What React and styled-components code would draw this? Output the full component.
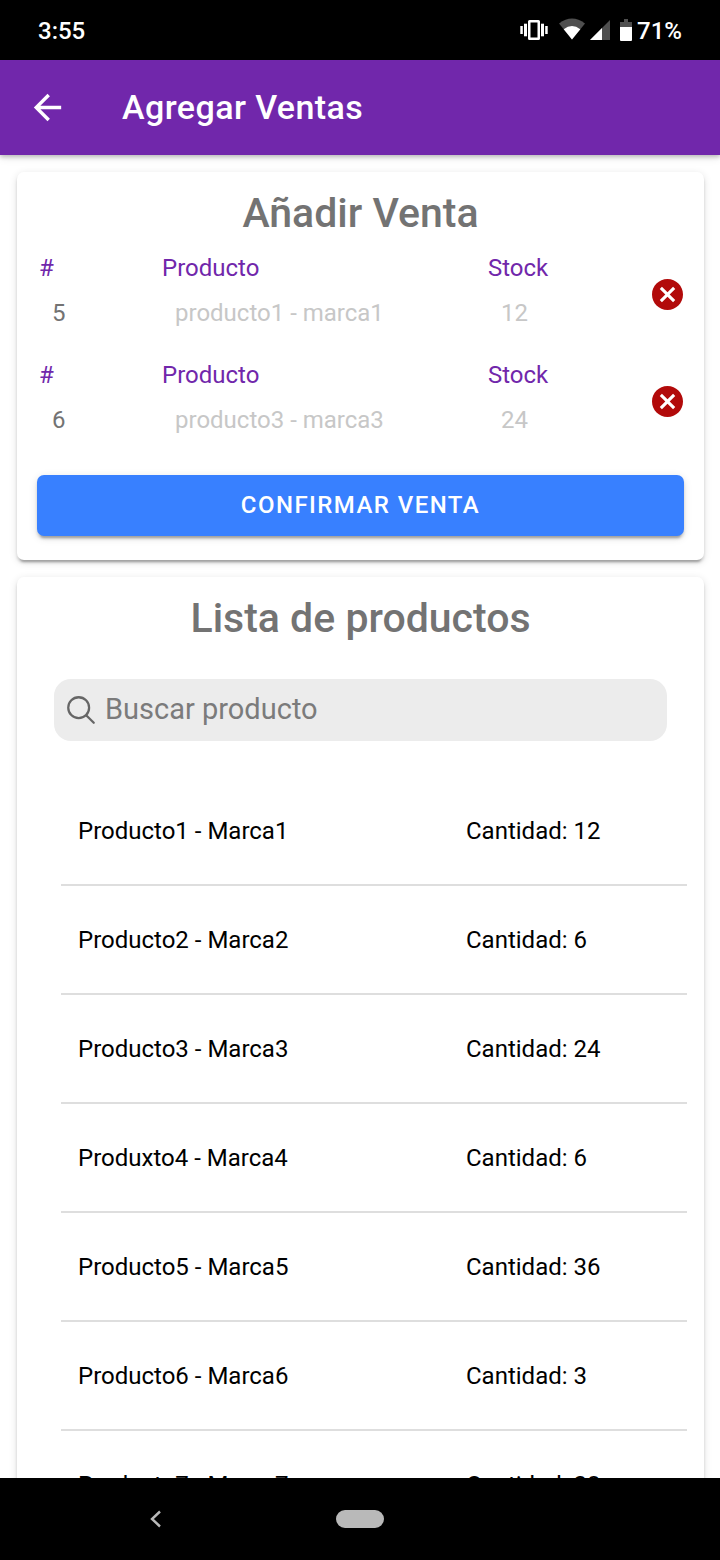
import React, { useState } from "react";
import styled, { createGlobalStyle } from "styled-components";

const GlobalStyle = createGlobalStyle`
  *, *::before, *::after { box-sizing: border-box; }
  body {
    margin: 0;
    background: #fff;
    color: #000;
    font-family: Roboto, "Liberation Sans", sans-serif;
  }
  button, input { font: inherit; color: inherit; }
`;

const Screen = styled.div`
  display: flex;
  flex-direction: column;
  height: 100vh;
`;

const StatusBar = styled.div`
  display: flex;
  align-items: center;
  justify-content: space-between;
  flex: none;
  height: 60px;
  padding: 2px 38px 0;
  background: #000;
  color: #fff;
  font-size: 24px;
  font-weight: 500;
  line-height: 28px;
`;

const StatusIcons = styled.div`
  display: flex;
  align-items: center;
`;

const StatusGlyphs = styled.svg`
  display: block;
  width: 114px;
  height: 28px;
  margin: 0 3px 2px 0;
`;

const Toolbar = styled.header`
  position: relative;
  z-index: 1;
  display: flex;
  align-items: center;
  flex: none;
  gap: 54px;
  height: 95px;
  padding: 0 27px;
  background: #7127ab;
  color: #fff;
  box-shadow: 0 2px 4px rgba(0, 0, 0, 0.2), 0 2px 9px rgba(0, 0, 0, 0.12);
`;

const IconButton = styled.button`
  display: flex;
  align-items: center;
  justify-content: center;
  padding: 0;
  border: 0;
  background: none;
  color: ${(p) => p.$color};
  cursor: pointer;

  svg {
    display: block;
    width: ${(p) => p.$size}px;
    height: ${(p) => p.$size}px;
  }
`;

const ToolbarTitle = styled.h1`
  margin: 0;
  padding-bottom: 2px;
  font-size: 34px;
  font-weight: 500;
  line-height: 40px;
  letter-spacing: 0.0125em;
`;

const Content = styled.main`
  flex: 1;
  min-height: 0;
  padding: 17px 16px 0 17px;
  overflow-y: auto;
  scrollbar-width: none;
`;

const Card = styled.section`
  margin-bottom: 17px;
  border-radius: 7px;
  background: #fff;
  box-shadow: 0 5px 2px -3px rgba(0, 0, 0, 0.2), 0 3px 3px rgba(0, 0, 0, 0.14),
    0 2px 9px rgba(0, 0, 0, 0.12);
`;

const CardTitle = styled.h2`
  margin: 0;
  padding-top: 17px;
  color: #737373;
  font-size: 41px;
  font-weight: 500;
  line-height: 48px;
  text-align: center;
`;

const SaleForm = styled.form`
  padding: 9px 20px 24px;
`;

const SaleRow = styled.div`
  display: grid;
  grid-template-columns: 123fr 326fr 164fr 34px;
  align-items: start;
  height: 107px;
`;

const Field = styled.div`
  display: flex;
  flex-direction: column;
  min-width: 0;
  padding: 8px 2px 0;
`;

const FieldLabel = styled.label`
  color: #7127ab;
  font-size: 24px;
  line-height: 28px;
`;

const FieldInput = styled.input`
  width: 100%;
  height: 62px;
  padding: 0 0 0 13px;
  border: 0;
  outline: 0;
  background: none;
  color: #737373;
  font-size: 24px;

  &:disabled { color: #c7c7c7; }
`;

const RemoveCell = styled.div`
  display: flex;
  justify-content: center;
  padding-top: 33px;
`;

const ConfirmButton = styled.button`
  display: block;
  width: 100%;
  height: 61px;
  margin-top: 15px;
  padding: 0 0 1px;
  border: 0;
  border-radius: 7px;
  background: #3880ff;
  color: #fff;
  font-size: 24px;
  font-weight: 500;
  letter-spacing: 0.06em;
  text-transform: uppercase;
  cursor: pointer;
  box-shadow: 0 5px 2px -3px rgba(0, 0, 0, 0.2), 0 3px 3px rgba(0, 0, 0, 0.14),
    0 2px 9px rgba(0, 0, 0, 0.12);
`;

const SearchBox = styled.label`
  display: flex;
  align-items: center;
  gap: 7px;
  height: 62px;
  margin: 37px 37px 36px;
  padding: 0 10px;
  border-radius: 17px;
  background: #ececec;
  color: #666;

  svg {
    flex: none;
    width: 34px;
    height: 34px;
  }
`;

const SearchInput = styled.input`
  flex: 1;
  min-width: 0;
  padding: 0 0 2px;
  border: 0;
  outline: 0;
  background: none;
  font-size: 29px;
  line-height: 34px;

  &::placeholder { color: #7b7b7b; opacity: 1; }
`;

const ProductList = styled.ul`
  margin: 0 17px 0 44px;
  padding: 0;
  list-style: none;
`;

const ProductItem = styled.li`
  display: grid;
  grid-template-columns: 388fr 221fr;
  align-items: center;
  height: 109px;
  padding-left: 17px;
  border-bottom: 2px solid #dedede;
  font-size: 24px;
  line-height: 28px;
`;

const NavBar = styled.nav`
  display: grid;
  grid-template-columns: 43fr 14fr 43fr;
  align-items: center;
  justify-items: center;
  flex: none;
  height: 82px;
  background: #000;
`;

const HomePill = styled.button`
  width: 48px;
  height: 18px;
  padding: 0;
  border: 0;
  border-radius: 9px;
  background: #b9b9b9;
`;

const sales = [
  { id: 1, quantity: "5", product: "producto1 - marca1", stock: "12" },
  { id: 3, quantity: "6", product: "producto3 - marca3", stock: "24" },
];

const products = [
  { name: "Producto1 - Marca1", quantity: 12 },
  { name: "Producto2 - Marca2", quantity: 6 },
  { name: "Producto3 - Marca3", quantity: 24 },
  { name: "Produxto4 - Marca4", quantity: 6 },
  { name: "Producto5 - Marca5", quantity: 36 },
  { name: "Producto6 - Marca6", quantity: 3 },
  { name: "Producto7 - Marca7", quantity: 28 },
];

function DeviceStatus() {
  return (
    <StatusGlyphs viewBox="520 16 114 28" aria-hidden="true">
      <g fill="#fff">
        <rect x="520.3" y="26" width="2.5" height="8" />
        <rect x="524" y="23.7" width="3" height="12.6" />
        <rect x="541" y="23.7" width="3" height="12.6" />
        <rect x="545.2" y="26" width="2.5" height="8" />
        <path d="M529.5 20h9a1.5 1.5 0 0 1 1.5 1.5v17a1.5 1.5 0 0 1-1.5 1.5h-9a1.5 1.5 0 0 1-1.5-1.5v-17a1.5 1.5 0 0 1 1.5-1.5zM530.5 22.5v15h7v-15z" fillRule="evenodd" />
      </g>
      <path d="M559 23.5Q572 13.5 585 23.5L572 39.5z" fill="#4f4f4f" />
      <path d="M563.7 29.3Q572 22.5 580.3 29.3L572 39.5z" fill="#fff" />
      <path d="M610 20v20h-20z" fill="#4f4f4f" />
      <path d="M602 28v12h-12z" fill="#fff" />
      <path d="M624 19h4v3h4v6h-12v-6h4z" fill="#4f4f4f" />
      <path d="M620 27h12v13a1 1 0 0 1-1 1h-10a1 1 0 0 1-1-1z" fill="#fff" />
    </StatusGlyphs>
  );
}

function SaleLine({ sale, onQuantity, onRemove }) {
  const id = `venta-${sale.id}`;
  return (
    <SaleRow>
      <Field>
        <FieldLabel htmlFor={`${id}-cantidad`}>#</FieldLabel>
        <FieldInput
          id={`${id}-cantidad`}
          inputMode="numeric"
          value={sale.quantity}
          onChange={(e) => onQuantity(e.target.value)}
        />
      </Field>
      <Field>
        <FieldLabel htmlFor={`${id}-producto`}>Producto</FieldLabel>
        <FieldInput id={`${id}-producto`} value={sale.product} disabled />
      </Field>
      <Field>
        <FieldLabel htmlFor={`${id}-stock`}>Stock</FieldLabel>
        <FieldInput id={`${id}-stock`} value={sale.stock} disabled />
      </Field>
      <RemoveCell>
        <IconButton type="button" $size={31} $color="#b20a0a" aria-label="Quitar" onClick={onRemove}>
          <svg viewBox="2 2 20 20" fill="currentColor">
            <path d="M12 2C6.47 2 2 6.47 2 12s4.47 10 10 10 10-4.47 10-10S17.53 2 12 2zm5 13.59L15.59 17 12 13.41 8.41 17 7 15.59 10.59 12 7 8.41 8.41 7 12 10.59 15.59 7 17 8.41 13.41 12 17 15.59z" />
          </svg>
        </IconButton>
      </RemoveCell>
    </SaleRow>
  );
}

export default function App() {
  const [lines, setLines] = useState(sales);
  const [query, setQuery] = useState("");
  const visible = products.filter((p) => p.name.toLowerCase().includes(query.toLowerCase()));

  return (
    <Screen>
      <GlobalStyle />
      <StatusBar>
        <span>3:55</span>
        <StatusIcons>
          <DeviceStatus />
          <span>71%</span>
        </StatusIcons>
      </StatusBar>
      <Toolbar>
        <IconButton type="button" $size={41} $color="#fff" aria-label="Volver">
          <svg viewBox="0 0 24 24" fill="currentColor">
            <path d="M20 11H7.83l5.59-5.59L12 4l-8 8 8 8 1.41-1.41L7.83 13H20v-2z" />
          </svg>
        </IconButton>
        <ToolbarTitle>Agregar Ventas</ToolbarTitle>
      </Toolbar>
      <Content>
        <Card>
          <CardTitle>Añadir Venta</CardTitle>
          <SaleForm onSubmit={(e) => e.preventDefault()}>
            {lines.map((sale) => (
              <SaleLine
                key={sale.id}
                sale={sale}
                onQuantity={(quantity) =>
                  setLines(lines.map((l) => (l.id === sale.id ? { ...l, quantity } : l)))
                }
                onRemove={() => setLines(lines.filter((l) => l.id !== sale.id))}
              />
            ))}
            <ConfirmButton type="submit">Confirmar venta</ConfirmButton>
          </SaleForm>
        </Card>
        <Card>
          <CardTitle>Lista de productos</CardTitle>
          <SearchBox>
            <svg viewBox="0 0 512 512" fill="none" stroke="currentColor" strokeWidth="34" strokeLinecap="round" aria-hidden="true">
              <circle cx="221" cy="221" r="157" />
              <path d="M338 338L448 448" />
            </svg>
            <SearchInput
              type="text"
              placeholder="Buscar producto"
              aria-label="Buscar producto"
              value={query}
              onChange={(e) => setQuery(e.target.value)}
            />
          </SearchBox>
          <ProductList>
            {visible.map((p) => (
              <ProductItem key={p.name}>
                <span>{p.name}</span>
                <span>Cantidad: {p.quantity}</span>
              </ProductItem>
            ))}
          </ProductList>
        </Card>
      </Content>
      <NavBar>
        <IconButton type="button" $size={20} $color="#b9b9b9" aria-label="Atrás">
          <svg viewBox="0 0 20 20" fill="none" stroke="currentColor" strokeWidth="2.4">
            <path d="M15 2.5L7 10l8 7.5" />
          </svg>
        </IconButton>
        <HomePill type="button" aria-label="Inicio" />
      </NavBar>
    </Screen>
  );
}
